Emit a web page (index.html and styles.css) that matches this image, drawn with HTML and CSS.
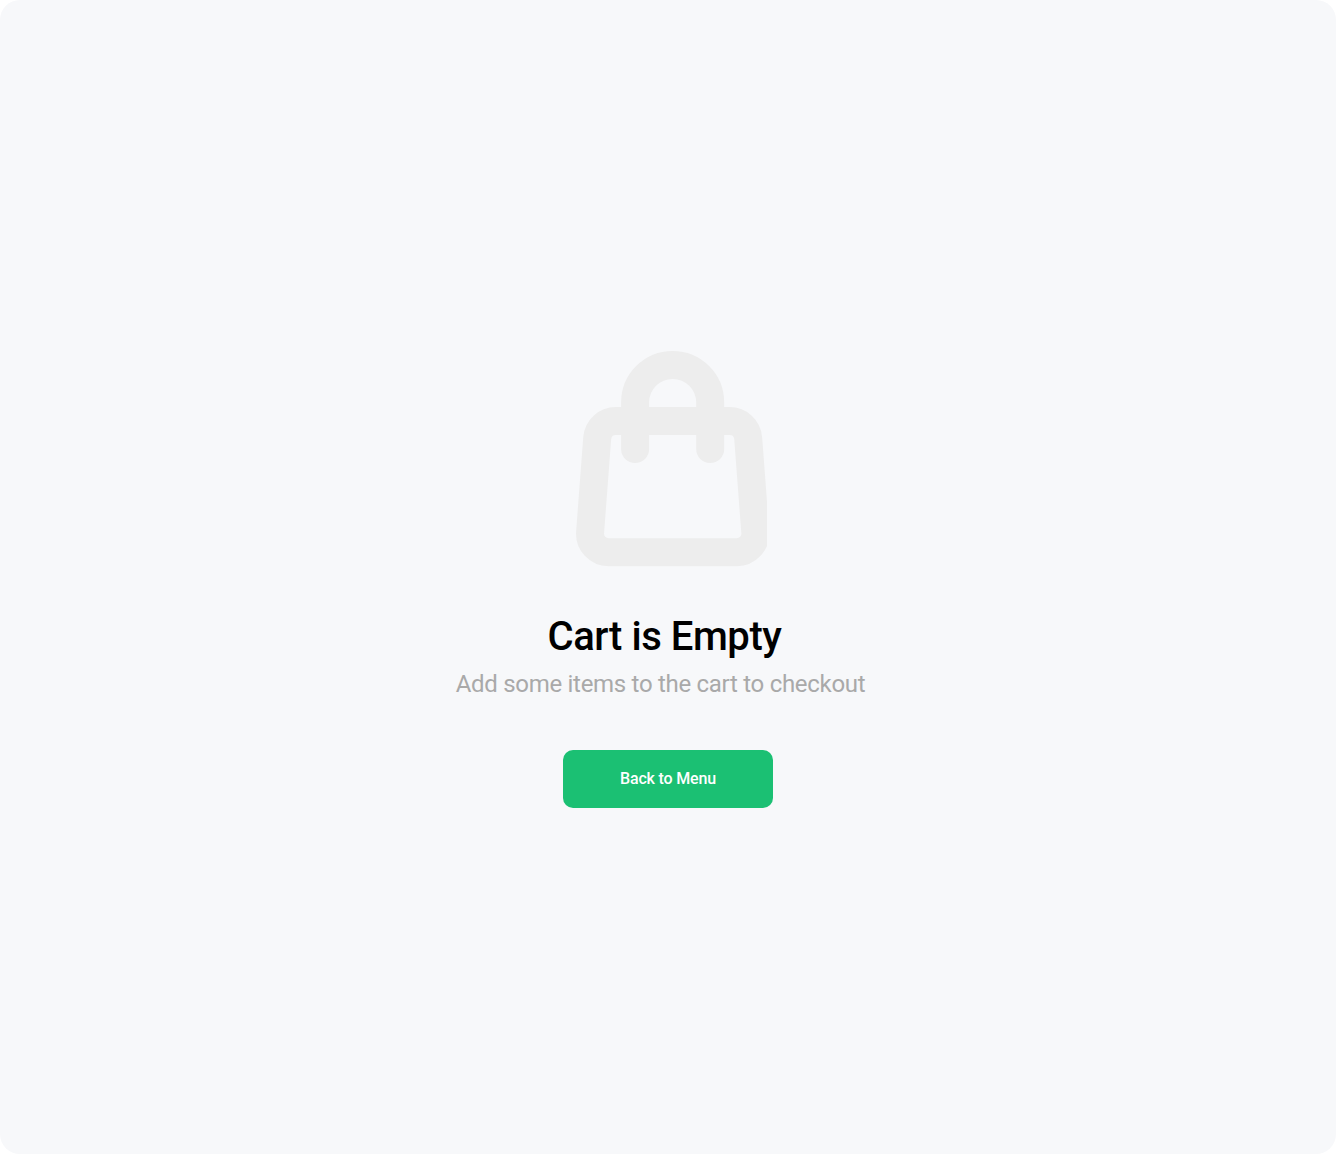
FILE: index.html
```html
<!DOCTYPE html>
<html lang="en">
<head>
<meta charset="utf-8">
<title>Cart is Empty</title>
<link rel="stylesheet" href="styles.css">
</head>
<body>
<main class="panel">
  <svg class="bag" viewBox="560 340 206.7 240" aria-hidden="true">
    <path d="M635.1 449V402.5a37.55 37.55 0 0 1 75.1 0V449"/>
    <path d="M615.8 421H729.6a18.6 18.6 0 0 1 18.6 17.2L755.3 532.2a18.6 18.6 0 0 1-18.6 20H608.7a18.6 18.6 0 0 1-18.6-20L597.2 438.2a18.6 18.6 0 0 1 18.6-17.2Z"/>
  </svg>
  <h1 class="title">Cart is Empty</h1>
  <p class="subtitle">Add some items to the cart to checkout</p>
  <button class="back" type="button">Back to Menu</button>
</main>
</body>
</html>
```
FILE: styles.css
```css
body {
  margin: 0;
  background: #fff;
  font-family: Roboto, sans-serif;
}
.panel {
  box-sizing: border-box;
  height: 1154px;
  padding-top: 340px;
  border-radius: 20px;
  background: #f7f8fa;
  display: flex;
  flex-direction: column;
  align-items: center;
}
.bag {
  width: 206.7px;
  height: 240px;
  margin-right: 9.3px;
  fill: none;
  stroke: #ededed;
  stroke-width: 28;
  stroke-linecap: round;
  overflow: hidden;
}
.title {
  margin: 33px 7px 0 0;
  font-size: 40px;
  line-height: 47px;
  font-weight: 500;
  letter-spacing: -0.44px;
  color: #000;
}
.subtitle {
  margin: 10px 15px 0 0;
  font-size: 24px;
  line-height: 28px;
  letter-spacing: -0.29px;
  color: #a9a9a9;
}
.back {
  width: 210px;
  height: 58px;
  margin-top: 52px;
  padding: 0 0 2px;
  border: 0;
  border-radius: 10px;
  background: #1bc073;
  color: #fff;
  font: 500 16px/19px Roboto, sans-serif;
  letter-spacing: -0.176px;
}
```
